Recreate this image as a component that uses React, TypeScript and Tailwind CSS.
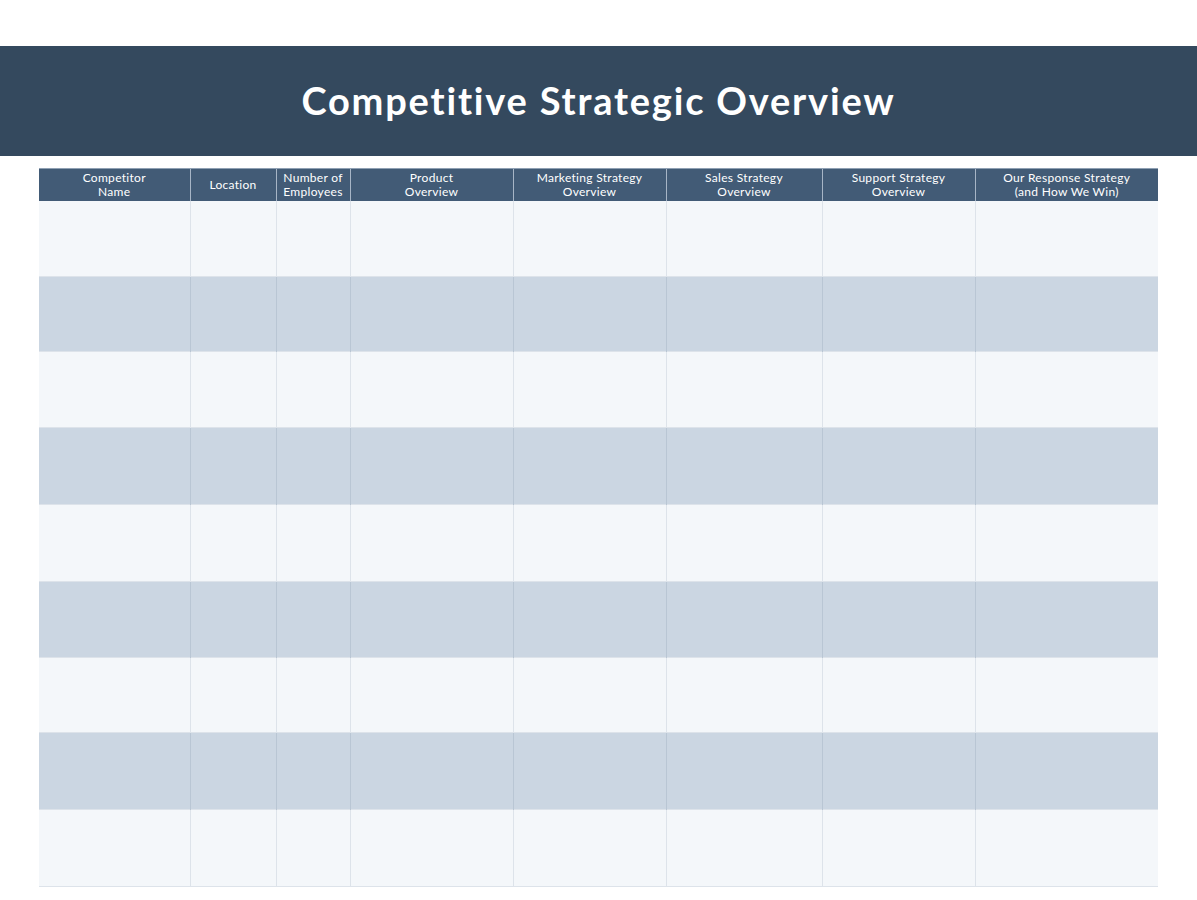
import React from 'react'

const columns = [
    { label: ['Competitor', 'Name'], width: 'w-[151px]' },
    { label: ['Location'], width: 'w-[86px]' },
    { label: ['Number of', 'Employees'], width: 'w-[74px]' },
    { label: ['Product', 'Overview'], width: 'w-[163px]' },
    { label: ['Marketing Strategy', 'Overview'], width: 'w-[153px]' },
    { label: ['Sales Strategy', 'Overview'], width: 'w-[156px]' },
    { label: ['Support Strategy', 'Overview'], width: 'w-[153px]' },
    { label: ['Our Response Strategy', '(and How We Win)'], width: 'w-[183px]' },
]

const rowHeights = ['h-[76px]', 'h-[75px]', 'h-[76px]', 'h-[77px]', 'h-[77px]', 'h-[76px]', 'h-[75px]', 'h-[77px]', 'h-[77px]']

const App = () => {
    return (
        <div className="w-[1197px] h-[900px] bg-white font-['Lato','Noto_Sans',sans-serif]">
            {/* Banner */}
            <div className="pt-[46px]">
                <div className="h-[110px] bg-[#34495e] flex items-center justify-center">
                    <h1 className="text-white text-[38px] font-bold tracking-[1.8px] pb-[2px]">
                        Competitive Strategic Overview
                    </h1>
                </div>
            </div>

            {/* Table */}
            <div className="pl-[39px] pt-[12px]">
                <table className="border-collapse table-fixed w-[1119px]">
                    <thead>
                        <tr className="h-[32px] bg-[#425b76]">
                            {columns.map((col, i) => (
                                <th
                                    key={i}
                                    className={`${col.width} p-0 text-white text-[12px] font-normal leading-[14px] tracking-[0.3px] text-center border-t border-t-[#8fa0b3] ${i > 0 ? 'border-l border-l-[#a7b5c6]' : ''}`}
                                >
                                    {col.label.map((line) => (
                                        <div key={line}>{line}</div>
                                    ))}
                                </th>
                            ))}
                        </tr>
                    </thead>
                    <tbody>
                        {rowHeights.map((h, r) => {
                            const dark = r % 2 === 1
                            return (
                                <tr
                                    key={r}
                                    className={`${h} ${dark ? 'bg-[#cbd6e2]' : 'bg-[#f4f7fa]'} border-b border-b-[#dde3ea]`}
                                >
                                    {columns.map((_, c) => (
                                        <td
                                            key={c}
                                            className={`p-0 ${c > 0 ? (dark ? 'border-l border-l-[#b9c6d4]' : 'border-l border-l-[#dde3ea]') : ''}`}
                                        />
                                    ))}
                                </tr>
                            )
                        })}
                    </tbody>
                </table>
            </div>
        </div>
    )
}

export default App
